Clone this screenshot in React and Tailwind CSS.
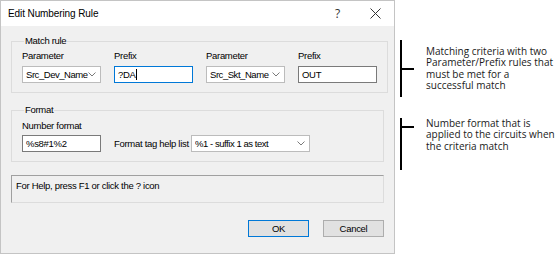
import React from "react";

const ui = { fontFamily: '"Liberation Sans", Arial, sans-serif' };

function Chevron() {
  return (
    <svg width="8" height="5" viewBox="0 0 8 5" className="shrink-0">
      <polyline points="0.5,0.5 4,4 7.5,0.5" fill="none" stroke="#7a7a7a" strokeWidth="1" />
    </svg>
  );
}

function Select({ value, className }) {
  return (
    <div className={`flex items-center h-[17px] bg-white border border-[#bcbcbc] pl-[3px] pr-[4px] ${className}`}>
      <span className="flex-1 whitespace-nowrap overflow-hidden tracking-[-0.45px]">{value}</span>
      <Chevron />
    </div>
  );
}

function Input({ value, focused, className }) {
  return (
    <div
      className={`flex items-center h-[17px] bg-white border pl-[3px] ${
        focused ? "border-[#0078d7]" : "border-[#7a7a7a]"
      } ${className}`}
    >
      {value}
      {focused && <span className="w-px h-[11px] bg-black" />}
    </div>
  );
}

function Group({ label, children }) {
  return (
    <fieldset className="border border-[#dcdcdc] px-[10px] pb-[9px]">
      <legend className="ml-[2px] px-[1px] leading-[12px]">{label}</legend>
      {children}
    </fieldset>
  );
}

function Bracket({ height, tickTop }) {
  return (
    <div
      className={`w-[14px] border-l-2 border-black flex flex-col shrink-0 ${
        tickTop ? "justify-start pt-[8px]" : "justify-center"
      }`}
      style={{ height }}
    >
      <div className="h-[2px] bg-black" />
    </div>
  );
}

export default function App() {
  return (
    <div className="flex w-[557px] h-[254px] bg-white text-black">
      <div
        className="w-[395px] h-[254px] border border-[#c4c4c4] bg-[#f0f0f0] flex flex-col shrink-0 text-[9.5px] leading-[12px] tracking-[-0.3px]"
        style={ui}
      >
        <div className="h-[25px] bg-white flex items-center pl-[7px] shrink-0">
          <span className="text-[10px] tracking-[-0.1px]">Edit Numbering Rule</span>
          <span className="ml-auto mr-[30px] text-[12px] text-[#333]" style={{ fontFamily: '"Open Sans", sans-serif' }}>
            ?
          </span>
          <svg width="11" height="11" viewBox="0 0 11 11" className="mr-[13px]">
            <line x1="0.5" y1="0.5" x2="10.5" y2="10.5" stroke="#333" strokeWidth="1" />
            <line x1="10.5" y1="0.5" x2="0.5" y2="10.5" stroke="#333" strokeWidth="1" />
          </svg>
        </div>

        <div className="flex flex-col px-[10px] pt-[9px]">
          <Group label="Match rule">
            <div className="grid grid-cols-[79px_79px_79px_79px] gap-x-[13px] pt-[3px]">
              <span>Parameter</span>
              <span>Prefix</span>
              <span>Parameter</span>
              <span>Prefix</span>
              <Select value="Src_Dev_Name" className="mt-[4px]" />
              <Input value="?DA" focused className="mt-[4px]" />
              <Select value="Src_Skt_Name" className="mt-[4px]" />
              <Input value="OUT" className="mt-[4px]" />
            </div>
          </Group>

          <div className="mt-[11px]">
            <Group label="Format">
              <div className="pt-[4px]">Number format</div>
              <div className="flex items-center mt-[3px]">
                <Input value="%s8#1%2" className="w-[79px]" />
                <span className="ml-[13px]">Format tag help list</span>
                <Select value="%1 - suffix 1 as text" className="w-[119px] ml-auto mr-[63px]" />
              </div>
            </Group>
          </div>

          <div className="mt-[13px] h-[28px] border border-t-[#a0a0a0] border-l-[#a0a0a0] border-b-[#dcdcdc] border-r-[#dcdcdc] pl-[4px] pt-[4px]">
            For Help, press F1 or click the ? icon
          </div>

          <div className="flex justify-end gap-[14px] mt-[17px]">
            <button className="w-[61px] h-[17px] bg-[#e1e1e1] border border-[#0078d7] leading-[15px]">OK</button>
            <button className="w-[61px] h-[17px] bg-[#e1e1e1] border border-[#adadad] leading-[15px]">Cancel</button>
          </div>
        </div>
      </div>

      <div
        className="flex flex-col pt-[40px] pl-[5px] text-[10px] leading-[11.3px] text-[#1a1a1a] whitespace-nowrap"
        style={{ fontFamily: '"Open Sans", sans-serif' }}
      >
        <div className="flex items-center">
          <Bracket height={57} />
          <div className="pl-[12px]">
            Matching criteria with two
            <br />
            Parameter/Prefix rules that
            <br />
            must be met for a
            <br />
            successful match
          </div>
        </div>
        <div className="flex items-start mt-[21px]">
          <Bracket height={52} tickTop />
          <div className="pl-[12px]">
            Number format that is
            <br />
            applied to the circuits when
            <br />
            the criteria match
          </div>
        </div>
      </div>
    </div>
  );
}
